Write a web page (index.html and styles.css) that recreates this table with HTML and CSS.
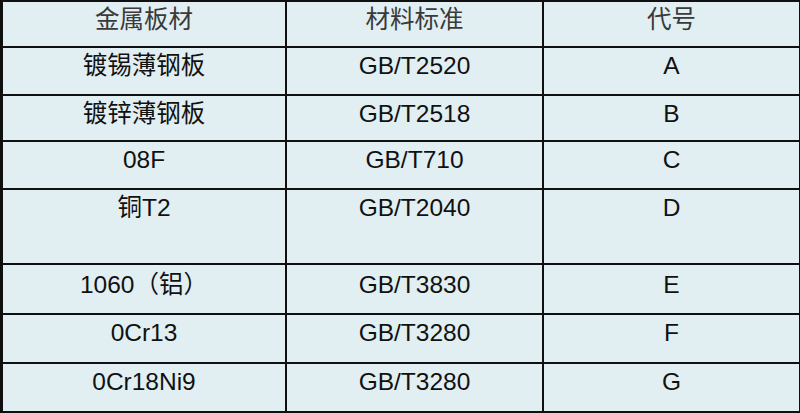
FILE: index.html
```html
<!DOCTYPE html>
<html lang="zh">
<head>
<meta charset="utf-8">
<title>金属板材</title>
<link rel="stylesheet" href="styles.css">
</head>
<body>
<table class="grid">
  <colgroup>
    <col class="c1"><col class="c2"><col class="c3">
  </colgroup>
  <thead>
    <tr class="r-head"><th>金属板材</th><th>材料标准</th><th>代号</th></tr>
  </thead>
  <tbody>
    <tr class="r48"><td>镀锡薄钢板</td><td>GB/T2520</td><td>A</td></tr>
    <tr class="r46"><td>镀锌薄钢板</td><td>GB/T2518</td><td>B</td></tr>
    <tr class="r48"><td>08F</td><td>GB/T710</td><td>C</td></tr>
    <tr class="r75"><td>铜T2</td><td>GB/T2040</td><td>D</td></tr>
    <tr class="r50"><td class="low">1060（铝）</td><td class="low">GB/T3830</td><td class="low">E</td></tr>
    <tr class="r49"><td>0Cr13</td><td>GB/T3280</td><td>F</td></tr>
    <tr class="r49"><td>0Cr18Ni9</td><td>GB/T3280</td><td>G</td></tr>
  </tbody>
</table>
</body>
</html>
```

FILE: styles.css
```css
html, body {
  margin: 0;
  padding: 0;
  background: #ffffff;
}
body {
  width: 800px;
  height: 413px;
  overflow: hidden;
  background: #0d0d0d;
}
.grid {
  border-collapse: collapse;
  table-layout: fixed;
  width: 798px;
  margin-left: 1px;
  background: #e1eff3;
  font-family: "Liberation Sans", "Noto Sans CJK SC", sans-serif;
  font-size: 24.5px;
  color: #111111;
}
.c1 { width: 284px; }
.c2 { width: 257px; }
.c3 { width: 257px; }
.grid th,
.grid td {
  border: 2px solid #101010;
  padding: 4px 0 0;
  line-height: 28px;
  text-align: center;
  vertical-align: top;
  font-weight: normal;
}
.grid th { color: #3a3a3a; padding-top: 4px; }
.grid td.low { padding-top: 6px; }
.r-head { height: 46px; }
.r46 { height: 46px; }
.r48 { height: 48px; }
.r50 { height: 50px; }
.r49 { height: 49px; }
.r75 { height: 75px; }
```
